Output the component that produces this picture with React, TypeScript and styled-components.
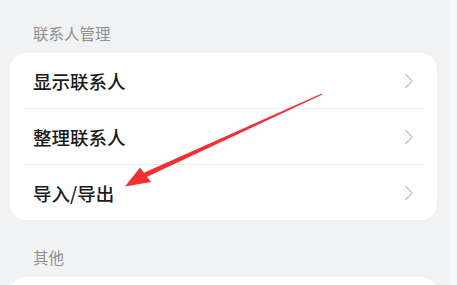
import styled, { createGlobalStyle } from 'styled-components';

const GlobalStyle = createGlobalStyle`
  body {
    margin: 0;
    background: #f1f2f4;
    font-family: "Noto Sans CJK SC", "Noto Sans", sans-serif;
  }
`;

// page: main column + the light strip at the screen edge
const Screen = styled.div`
  position: relative;
  width: 457px;
  height: 285px;
  overflow: hidden;
  display: flex;
`;

const Main = styled.div`
  width: 449px;
  display: flex;
  flex-direction: column;
  padding: 0 12px 0 10px;
  box-sizing: border-box;
`;

const EdgeStrip = styled.div`
  width: 8px;
  background: #f6f7f8;
`;

const SectionTitle = styled.div<{ $top: number }>`
  flex-shrink: 0;
  margin-top: ${(p) => p.$top}px;
  height: 20px;
  line-height: 20px;
  padding-left: 23px;
  font-size: 15.5px;
  color: #8f8f8f;
  margin-bottom: 10px;
`;

const Card = styled.div<{ $minHeight?: number }>`
  flex-shrink: 0;
  background: #ffffff;
  border-radius: 16px;
  display: flex;
  flex-direction: column;
  min-height: ${(p) => p.$minHeight ?? 0}px;
`;

const Row = styled.div<{ $divider?: boolean }>`
  height: 55px;
  margin: 0 13px 0 14px;
  padding: 0 10px 0 9px;
  display: flex;
  align-items: center;
  justify-content: space-between;
  border-bottom: ${(p) => (p.$divider ? '1px solid #ececec' : 'none')};
`;

const RowLabel = styled.span`
  font-size: 18.5px;
  font-weight: 500;
  color: #1b1b1b;
`;

const Chevron = () => (
  <svg width="10" height="16" viewBox="0 0 10 16">
    <path d="M2 1.5 L8 8 L2 14.5" fill="none" stroke="#c6c6c6" strokeWidth="1.4" strokeLinecap="round" strokeLinejoin="round" />
  </svg>
);

// annotation arrow drawn over the list
const Overlay = styled.svg`
  position: absolute;
  left: 0;
  top: 0;
  pointer-events: none;
`;

const rows = ['显示联系人', '整理联系人', '导入/导出'];

export default function App() {
  return (
    <>
      <GlobalStyle />
      <Screen>
        <Main>
          <SectionTitle $top={23}>联系人管理</SectionTitle>
          <Card>
            {rows.map((r, i) => (
              <Row key={r} $divider={i < rows.length - 1}>
                <RowLabel>{r}</RowLabel>
                <Chevron />
              </Row>
            ))}
          </Card>
          <SectionTitle $top={27}>其他</SectionTitle>
          <Card $minHeight={40} />
        </Main>
        <EdgeStrip />
        <Overlay width="457" height="285" viewBox="0 0 457 285">
          <polygon points="322.3,94.5 321.7,93.5 143.9,172.7 146.1,177.3" fill="#ef3036" />
          <polygon points="140,167.5 125,186.5 151,182" fill="#ef3036" />
        </Overlay>
      </Screen>
    </>
  );
}
